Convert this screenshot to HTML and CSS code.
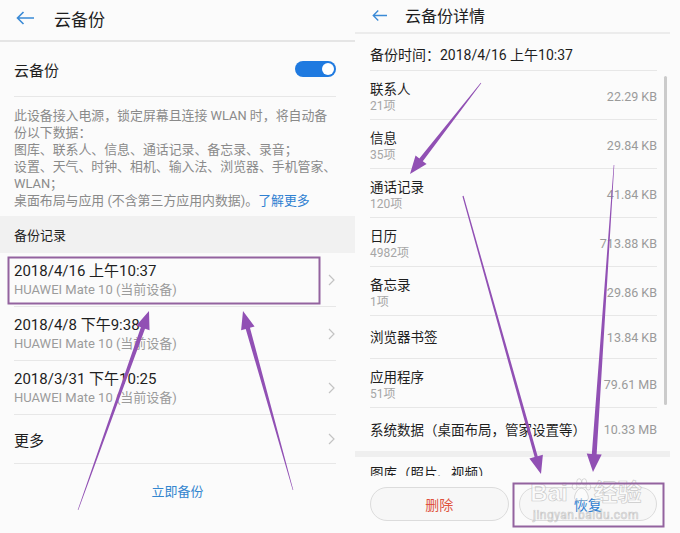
FILE: index.html
```html
<!DOCTYPE html>
<html lang="zh-CN">
<head>
<meta charset="UTF-8" />
<meta name="viewport" content="width=device-width, initial-scale=1.0"/>
<title>云备份</title>
  <link rel="stylesheet" href="styles.css">
</head>
<body>
  <div class="shot">

    <!-- Left screen: backup settings -->
    <section class="screen home">
      <header class="bar">
        <svg class="back" viewBox="0 0 18 14"><path d="M7.5 1 L1.5 7 L7.5 13 M1.5 7 H18" /></svg>
        <h1>云备份</h1>
      </header>

      <div class="setting">
        <span>云备份</span>
        <span class="switch"></span>
      </div>

      <p class="note">此设备接入电源，锁定屏幕且连接 WLAN 时，将自动备<br>份以下数据：<br>图库、联系人、信息、通话记录、备忘录、录音；<br>设置、天气、时钟、相机、输入法、浏览器、手机管家、<br>WLAN；<br>桌面布局与应用 (不含第三方应用内数据)。<a href="#">了解更多</a></p>

      <div class="group-title">备份记录</div>
      <ul class="records">
        <li>
          <div><b>2018/4/16 上午10:37</b><small>HUAWEI Mate 10 (当前设备)</small></div>
          <svg class="chev" viewBox="0 0 7 12"><path d="M1 1 L6 6 L1 11" /></svg>
        </li>
        <li>
          <div><b>2018/4/8 下午9:38</b><small>HUAWEI Mate 10 (当前设备)</small></div>
          <svg class="chev" viewBox="0 0 7 12"><path d="M1 1 L6 6 L1 11" /></svg>
        </li>
        <li>
          <div><b>2018/3/31 下午10:25</b><small>HUAWEI Mate 10 (当前设备)</small></div>
          <svg class="chev" viewBox="0 0 7 12"><path d="M1 1 L6 6 L1 11" /></svg>
        </li>
        <li class="more">
          <span>更多</span>
          <svg class="chev" viewBox="0 0 7 12"><path d="M1 1 L6 6 L1 11" /></svg>
        </li>
      </ul>
      <div class="backup-now">立即备份</div>
    </section>

    <!-- Right screen: backup details -->
    <section class="screen detail">
      <header class="bar">
        <svg class="back" viewBox="0 0 18 14"><path d="M7.5 1 L1.5 7 L7.5 13 M1.5 7 H18" /></svg>
        <h1>云备份详情</h1>
      </header>
      <div class="stamp">备份时间：2018/4/16 上午10:37</div>

      <div class="list">
        <div class="item"><div><b>联系人</b><small>21项</small></div><span class="size">22.29 KB</span></div>
        <div class="item"><div><b>信息</b><small>35项</small></div><span class="size">29.84 KB</span></div>
        <div class="item"><div><b>通话记录</b><small>120项</small></div><span class="size">41.84 KB</span></div>
        <div class="item"><div><b>日历</b><small>4982项</small></div><span class="size">713.88 KB</span></div>
        <div class="item"><div><b>备忘录</b><small>1项</small></div><span class="size">29.86 KB</span></div>
        <div class="item single"><b>浏览器书签</b><span class="size">13.84 KB</span></div>
        <div class="item"><div><b>应用程序</b><small>51项</small></div><span class="size">79.61 MB</span></div>
        <div class="item single last"><b>系统数据（桌面布局，管家设置等）</b><span class="size">10.33 MB</span></div>
        <div class="divider"></div>
        <div class="item cut"><b>图库（照片、视频）</b></div>
        <div class="scroll"></div>
      </div>

      <div class="actions">
        <button class="del">删除</button>
        <button class="restore">恢复</button>
      </div>
    </section>

    <!-- Watermark stamped on the screenshot -->
    <div class="watermark">
      <span class="wm-big">Bai<svg class="paw" viewBox="0 0 24 28">
        <ellipse cx="5" cy="9" rx="2.6" ry="3.4" />
        <ellipse cx="10" cy="4" rx="2.6" ry="3.4" />
        <ellipse cx="15.5" cy="4" rx="2.6" ry="3.4" />
        <ellipse cx="20" cy="9.5" rx="2.6" ry="3.4" />
        <path d="M12.5 11 C8 11 5 18 5 21 C5 25 9 25 12.5 24 C16 25 20 25 20 21 C20 18 17 11 12.5 11 Z" />
      </svg>经验</span>
      <span class="wm-small">jingyan.baidu.com</span>
    </div>

    <!-- Annotation marks drawn over both screens -->
    <svg class="marks" viewBox="0 0 680 533">
      <rect class="box" x="8.5" y="257.5" width="311" height="46" />
      <rect class="box" x="513.5" y="483.5" width="150" height="43" />
      <polygon points="77.72,509.9 140.88,327.22 136.36,325.61 149,311 149.54,330.31 145.02,328.7 78.28,510.1" />
      <polygon points="293.29,489.92 249.96,327.74 254.58,326.45 243,311 241.1,330.21 245.72,328.92 292.71,490.08" />
      <polygon points="481.24,83.18 422.81,161.15 426.59,164.11 410,174 415.55,155.5 419.33,158.45 480.76,82.82" />
      <polygon points="463.58,195.84 537.68,456.24 542.88,454.78 541,474 529.4,458.56 534.6,457.1 462.42,196.16" />
      <polygon points="614.3,165.02 596.63,454.2 601.72,454.55 593,472 586.74,453.53 591.83,453.88 613.7,164.98" />
    </svg>
  </div>
</body>
</html>
```

FILE: styles.css
```css
:root {
  --ink: #1e1e1e;
  --grey: #9b9b9b;
  --line: #e7e7e7;
  --blue: #2f80d1;
  --purple: #9150b4;
}

* {
  box-sizing: border-box;
}

body {
  margin: 0;
  background: #fbfbfb;
  font-family: Roboto, "Noto Sans CJK SC", sans-serif;
  color: var(--ink);
}

.shot {
  position: relative;
  width: 680px;
  height: 533px;
  display: flex;
  overflow: hidden;
}

.screen {
  display: flex;
  flex-direction: column;
}

.home {
  width: 355px;
}

.detail {
  width: 325px;
}

/* headers */
.bar {
  display: flex;
  align-items: center;
}

.bar h1 {
  margin: 0;
  font-weight: 400;
}

.back {
  width: 18px;
  height: 14px;
  fill: none;
  stroke: #3a8ad6;
  stroke-width: 1.6;
}

.home .bar {
  height: 42px;
  padding: 0 0 4px 16px;
  border-bottom: 2px solid #e5e5e5;
}

.home .bar h1 {
  margin-left: 20px;
  font-size: 17px;
}

.detail .bar {
  height: 34px;
  margin-right: 10px;
  padding: 0 0 2px 17px;
  border-bottom: 2px solid #ececec;
}

.detail .back {
  width: 15px;
  height: 13px;
}

.detail .bar h1 {
  margin-left: 18px;
  font-size: 16px;
}

/* left screen */
.setting {
  height: 55px;
  margin: 0 19px 0 14px;
  display: flex;
  align-items: center;
  justify-content: space-between;
  border-bottom: 1px solid var(--line);
  font-size: 15px;
}

.switch {
  width: 41px;
  height: 16px;
  padding: 2px;
  border-radius: 8px;
  background: #1f7ae0;
  display: flex;
  justify-content: flex-end;
}

.switch::after {
  content: "";
  width: 12px;
  height: 12px;
  border-radius: 50%;
  background: #fff;
}

.note {
  margin: 0 14px;
  padding: 10px 0 7px;
  font-size: 12.9px;
  line-height: 17px;
  color: #8a8a8a;
  white-space: nowrap;
}

.note a {
  color: var(--blue);
  text-decoration: none;
}

.group-title {
  height: 37px;
  padding: 3px 0 0 14px;
  line-height: 34px;
  background: #f1f1f1;
  font-size: 13px;
}

.records {
  list-style: none;
  margin: 0;
  padding: 0;
}

.records li {
  height: 54px;
  margin: 0 19px 0 14px;
  padding: 8px 0 7px;
  display: flex;
  align-items: center;
  justify-content: space-between;
  border-bottom: 1px solid var(--line);
}

.records b {
  display: block;
  font-weight: 400;
  font-size: 15px;
  line-height: 20px;
}

.records small {
  display: block;
  font-size: 13px;
  line-height: 18px;
  color: var(--grey);
}

.records .more {
  height: 49px;
  padding: 0;
  font-size: 15px;
}

.chev {
  width: 7px;
  height: 12px;
  margin-right: 1px;
  fill: none;
  stroke: #c3c3c3;
  stroke-width: 1.2;
}

.backup-now {
  height: 52px;
  display: flex;
  align-items: center;
  justify-content: center;
  font-size: 13px;
  color: #3486cf;
}

/* right screen */
.stamp {
  height: 37px;
  margin: 0 23px 0 15px;
  padding-top: 3px;
  display: flex;
  align-items: center;
  border-bottom: 1px solid var(--line);
  font-size: 14px;
}

.list {
  position: relative;
  height: 405px;
  overflow: hidden;
}

.item {
  height: 49px;
  margin: 0 23px 0 15px;
  padding-top: 2px;
  display: flex;
  align-items: center;
  justify-content: space-between;
  border-bottom: 1px solid var(--line);
}

.item.single {
  height: 43px;
  padding-top: 0;
}

.item.last {
  border-bottom: none;
}

.item b {
  display: block;
  font-weight: 400;
  font-size: 13.5px;
  line-height: 20px;
}

.item small {
  display: block;
  font-size: 12px;
  line-height: 14px;
  color: #a6a6a6;
}

.size {
  font-size: 12.5px;
  color: #9a9a9a;
}

.divider {
  height: 6px;
  margin-right: 10px;
  background: #efefef;
}

.item.cut {
  align-items: flex-start;
  padding-top: 6px;
  border-bottom: none;
}

.scroll {
  position: absolute;
  left: 309px;
  top: 5px;
  width: 3px;
  height: 329px;
  border-radius: 2px;
  background: #cbcbcb;
}

.actions {
  display: flex;
  gap: 10px;
  margin: 0 23px 0 15px;
  padding-top: 11px;
}

.actions button {
  flex: 1;
  height: 34px;
  border: 1px solid #dcdcdc;
  border-radius: 17px;
  background: #f7f7f7;
  font-family: inherit;
  font-size: 14px;
}

.actions .del {
  color: #e0533f;
}

.actions .restore {
  color: var(--blue);
}

/* watermark */
.watermark {
  position: absolute;
  left: 520px;
  top: 478px;
  width: 132px;
  display: flex;
  flex-direction: column;
  align-items: center;
  color: rgba(255, 255, 255, 0.55);
  -webkit-text-stroke: 0.7px rgba(170, 170, 170, 0.6);
  pointer-events: none;
}

.wm-big {
  display: flex;
  align-items: center;
  font: 700 24px "Liberation Sans", "Noto Sans CJK SC", sans-serif;
  line-height: 28px;
}

.paw {
  width: 22px;
  height: 26px;
  margin: 0 2px 4px;
  fill: rgba(255, 255, 255, 0.55);
  stroke: rgba(170, 170, 170, 0.6);
  stroke-width: 0.8;
}

.wm-small {
  font-size: 12px;
  line-height: 14px;
  letter-spacing: 0.5px;
}

/* annotations */
.marks {
  position: absolute;
  left: 0;
  top: 0;
  width: 680px;
  height: 533px;
  pointer-events: none;
  fill: var(--purple);
}

.marks .box {
  fill: none;
  stroke: #93639f;
  stroke-width: 2;
}
```
